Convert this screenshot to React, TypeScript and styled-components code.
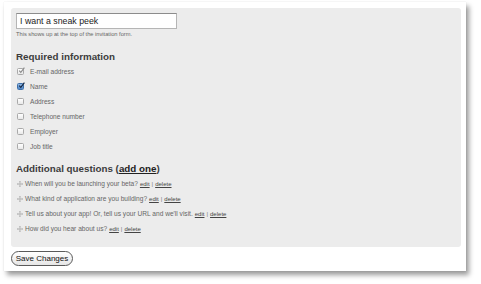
import React from "react";
import styled, { createGlobalStyle } from "styled-components";

const GlobalStyle = createGlobalStyle`
  html, body {
    margin: 0;
    padding: 0;
    background: #ffffff;
  }
  body {
    font-family: "Liberation Sans", Arial, sans-serif;
    color: #555;
  }
`;

const Page = styled.div`
  width: 481px;
  height: 284px;
  box-sizing: border-box;
  padding: 2px 0 0 4px;
  overflow: hidden;
`;

const Card = styled.div`
  width: 462px;
  height: 269px;
  box-sizing: border-box;
  padding: 6px 5px 0 7px;
  background: #fff;
  box-shadow: 3px 4px 5px rgba(0, 0, 0, 0.4), 0 0 1px rgba(0, 0, 0, 0.12);
`;

const Panel = styled.div`
  background: #ececec;
  border-radius: 3px;
  padding: 5px 5px 11px 5px;
`;

const NameInput = styled.input`
  display: block;
  box-sizing: border-box;
  width: 161px;
  height: 16px;
  margin: 0;
  padding: 0 3px;
  border: 1px solid #b5b5b5;
  border-top-color: #8c8c8c;
  background: #fff;
  font-family: "Liberation Sans", Arial, sans-serif;
  font-size: 8.8px;
  color: #222;
  outline: none;
`;

const Hint = styled.div`
  margin-top: 1px;
  height: 8px;
  line-height: 8px;
  font-size: 5.7px;
  color: #666;
`;

const Heading = styled.h2<{ $top: number }>`
  margin: ${(p) => p.$top}px 0 0 0;
  height: 14px;
  line-height: 14px;
  font-size: 9.8px;
  font-weight: bold;
  color: #3c3c3c;
`;

const AddLink = styled.a`
  color: #222;
  text-decoration: underline;
  cursor: pointer;
`;

const List = styled.ul`
  list-style: none;
  margin: 0;
  padding: 0;
`;

const Row = styled.li`
  display: flex;
  align-items: center;
  height: 15px;
  font-size: 6.6px;
  color: #666;
`;

const Box = styled.span<{ $state: "none" | "on" | "locked" }>`
  position: relative;
  box-sizing: border-box;
  width: 7px;
  height: 7px;
  margin: 0 6px 0 1px;
  border: 1px solid ${(p) => (p.$state === "on" ? "#3d6fa8" : "#a9a9a9")};
  border-radius: 1.5px;
  background: ${(p) =>
    p.$state === "on"
      ? "linear-gradient(#8fb6e3, #4f86c6)"
      : "linear-gradient(#ffffff, #e9e9e9)"};
  svg {
    position: absolute;
    left: 0;
    top: -2px;
  }
`;

const Handle = styled.span`
  display: inline-flex;
  width: 6px;
  margin: 0 2px 0 1px;
`;

const SmallLink = styled.a<{ $first?: boolean }>`
  margin-left: ${(p) => (p.$first ? 2 : 0)}px;
  color: #444;
  font-size: 6px;
  text-decoration: underline;
`;

const Sep = styled.span`
  margin: 0 2px;
  color: #777;
  font-size: 6px;
`;

const SaveButton = styled.button`
  display: block;
  margin: 4px 0 0 0;
  height: 15px;
  width: 62px;
  padding: 0;
  border: 1px solid #5a5a5a;
  border-radius: 8px;
  background: linear-gradient(#ffffff, #e6e6e6);
  font-family: "Liberation Sans", Arial, sans-serif;
  font-size: 8px;
  color: #111;
`;

const Check = ({ color }: { color: string }) => (
  <svg width="7" height="7" viewBox="0 0 7 7">
    <path d="M1.2 3.6 L2.8 5.4 L6.4 0.6" stroke={color} strokeWidth="1.1" fill="none" />
  </svg>
);

const Grip = () => (
  <svg width="6" height="6" viewBox="0 0 6 6">
    <path
      d="M3 0.3 V5.7 M0.3 3 H5.7 M2.2 1.1 L3 0.3 L3.8 1.1 M2.2 4.9 L3 5.7 L3.8 4.9 M1.1 2.2 L0.3 3 L1.1 3.8 M4.9 2.2 L5.7 3 L4.9 3.8"
      stroke="#a8a8a8"
      strokeWidth="0.7"
      fill="none"
    />
  </svg>
);

const fields: { label: string; state: "none" | "on" | "locked" }[] = [
  { label: "E-mail address", state: "locked" },
  { label: "Name", state: "on" },
  { label: "Address", state: "none" },
  { label: "Telephone number", state: "none" },
  { label: "Employer", state: "none" },
  { label: "Job title", state: "none" },
];

const questions = [
  "When will you be launching your beta?",
  "What kind of application are you building?",
  "Tell us about your app! Or, tell us your URL and we'll visit.",
  "How did you hear about us?",
];

const App = () => {
  return (
    <Page>
      <GlobalStyle />
      <Card>
        <Panel>
          <NameInput defaultValue="I want a sneak peek" />
          <Hint>This shows up at the top of the invitation form.</Hint>

          <Heading $top={12}>Required information</Heading>
          <List>
            {fields.map((f) => (
              <Row key={f.label}>
                <Box $state={f.state}>
                  {f.state === "locked" && <Check color="#8a8a8a" />}
                  {f.state === "on" && <Check color="#10233f" />}
                </Box>
                {f.label}
              </Row>
            ))}
          </List>

          <Heading $top={8}>
            Additional questions (<AddLink>add one</AddLink>)
          </Heading>
          <List>
            {questions.map((q) => (
              <Row key={q}>
                <Handle>
                  <Grip />
                </Handle>
                {q}
                <SmallLink $first>edit</SmallLink>
                <Sep>|</Sep>
                <SmallLink>delete</SmallLink>
              </Row>
            ))}
          </List>
        </Panel>
        <SaveButton>Save Changes</SaveButton>
      </Card>
    </Page>
  );
};

export default App;
